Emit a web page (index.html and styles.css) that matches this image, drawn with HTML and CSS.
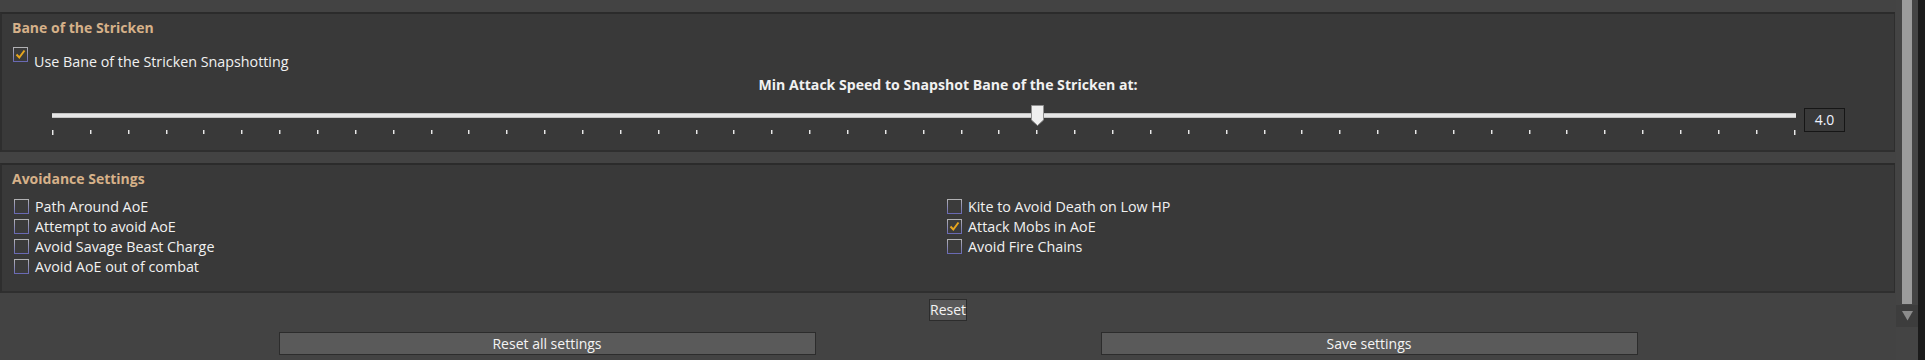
FILE: index.html
```html
<!DOCTYPE html>
<html>
<head>
<meta charset="utf-8">
<link rel="stylesheet" href="styles.css">
</head>
<body>
<div class="window">
  <div class="content">
    <section class="panel panel-bane">
      <h2 class="panel-title">Bane of the Stricken</h2>
      <label class="check check-first">
        <span class="box checked"><svg viewBox="0 0 15 15" width="15" height="15"><polyline points="3.5,7.5 6.3,10.5 11.5,3.5" fill="none" stroke="#e6a51e" stroke-width="2"/></svg></span>
        <span class="check-text">Use Bane of the Stricken Snapshotting</span>
      </label>
      <div class="slider-label">Min Attack Speed to Snapshot Bane of the Stricken at:</div>
      <div class="slider-row">
        <div class="slider">
          <div class="track"></div>
          <div class="ticks">
            <i class="tick end"></i><i class="tick"></i><i class="tick"></i><i class="tick"></i><i class="tick"></i><i class="tick"></i><i class="tick"></i><i class="tick"></i><i class="tick"></i><i class="tick"></i>
            <i class="tick"></i><i class="tick"></i><i class="tick"></i><i class="tick"></i><i class="tick"></i><i class="tick"></i><i class="tick"></i><i class="tick"></i><i class="tick"></i><i class="tick"></i>
            <i class="tick"></i><i class="tick"></i><i class="tick"></i><i class="tick"></i><i class="tick"></i><i class="tick"></i><i class="tick"></i><i class="tick"></i><i class="tick"></i><i class="tick"></i>
            <i class="tick"></i><i class="tick"></i><i class="tick"></i><i class="tick"></i><i class="tick"></i><i class="tick"></i><i class="tick"></i><i class="tick"></i><i class="tick"></i><i class="tick"></i>
            <i class="tick"></i><i class="tick"></i><i class="tick"></i><i class="tick"></i><i class="tick"></i><i class="tick"></i><i class="tick end"></i>
          </div>
          <svg class="thumb" style="left: calc(56.52% - 6.5px)" viewBox="0 0 13 21" width="13" height="21"><path d="M0.5 0.5 H12.5 V15 L6.5 20.5 L0.5 15 Z" fill="#efefef" stroke="#8f8f8f"/></svg>
        </div>
        <div class="value">4.0</div>
      </div>
    </section>

    <section class="panel panel-avoid">
      <h2 class="panel-title">Avoidance Settings</h2>
      <div class="grid">
        <div class="col">
          <label class="check"><span class="box"></span><span class="check-text">Path Around AoE</span></label>
          <label class="check"><span class="box"></span><span class="check-text">Attempt to avoid AoE</span></label>
          <label class="check"><span class="box"></span><span class="check-text">Avoid Savage Beast Charge</span></label>
          <label class="check"><span class="box"></span><span class="check-text">Avoid AoE out of combat</span></label>
        </div>
        <div class="col">
          <label class="check"><span class="box"></span><span class="check-text">Kite to Avoid Death on Low HP</span></label>
          <label class="check"><span class="box checked"><svg viewBox="0 0 15 15" width="15" height="15"><polyline points="3.5,7.5 6.3,10.5 11.5,3.5" fill="none" stroke="#e6a51e" stroke-width="2"/></svg></span><span class="check-text">Attack Mobs in AoE</span></label>
          <label class="check"><span class="box"></span><span class="check-text">Avoid Fire Chains</span></label>
        </div>
      </div>
    </section>

    <div class="reset-row"><button class="btn btn-small">Reset</button></div>
    <div class="actions">
      <button class="btn btn-wide">Reset all settings</button>
      <button class="btn btn-wide">Save settings</button>
    </div>
  </div>
  <div class="scrollbar">
    <div class="scroll-thumb"></div>
    <div class="scroll-arrow"><svg viewBox="0 0 11 10" width="11" height="10"><path d="M0 0 H11 L5.5 9.5 Z" fill="#8c8c8c"/></svg></div>
  </div>
  <div class="edge"></div>
</div>
</body>
</html>
```

FILE: styles.css
```css
* { box-sizing: border-box; }
html, body { margin: 0; padding: 0; }
body {
  background: #434343;
  font-family: "Open Sans", "Noto Sans", sans-serif;
  font-size: 14px;
  color: #f1f1f1;
  overflow: hidden;
}
.window {
  display: flex;
  height: 360px;
}
.content {
  width: 1896px;
  padding-top: 12px;
}
.panel {
  margin: 0 1px 0 0;
  background: #393939;
  border-top: 2px solid #2b2b2b;
  border-bottom: 2px solid #2f2f2f;
  border-left: 2px solid #2e2e2e;
  border-right: 1px solid #2e2e2e;
}
.panel-bane { height: 140px; }
.panel-avoid { height: 130px; margin-top: 11px; }
.panel-title {
  margin: 4px 0 0 10px;
  font-size: 14px;
  line-height: 20px;
  font-weight: 700;
  color: #d6b189;
}
.check {
  display: flex;
  align-items: flex-start;
  height: 20px;
  padding-left: 11px;
}
.check-first { margin-top: 9px; height: 25px; }
.box {
  width: 15px;
  height: 15px;
  margin-top: 2px;
  border: 1px solid;
  border-image: linear-gradient(#b4b4b4, #6767b3) 1;
  background: #3b3b3b;
  flex: none;
  position: relative;
}
.box svg { position: absolute; left: -1px; top: -1px; }
.check-first .box { margin-top: 0; }
.check-text {
  margin-left: 6px;
  font-size: 14.3px;
  line-height: 20px;
  white-space: nowrap;
}
.check-first .check-text { padding-top: 5px; }
.slider-label {
  margin-top: 3px;
  text-align: center;
  font-weight: 700;
  font-size: 14.1px;
  line-height: 20px;
}
.slider-row {
  display: flex;
  margin: 10px 49px 0 50px;
}
.slider {
  flex: 1;
  position: relative;
  height: 30px;
}
.track {
  margin-top: 8px;
  height: 5px;
  background: #e6e6e6;
  border-top: 1px solid #c4c4c4;
  border-bottom: 1px solid #c4c4c4;
}
.ticks {
  display: flex;
  justify-content: space-between;
  margin-top: 12px;
  height: 5px;
}
.tick {
  display: block;
  width: 2px;
  height: 4px;
  background: linear-gradient(90deg, #e8e8e8 50%, #8a8a8a 50%);
}
.tick.end { height: 5px; }
.thumb { position: absolute; top: 0; }
.value {
  margin-left: 8px;
  margin-top: 3px;
  width: 41px;
  height: 24px;
  border: 1px solid #161616;
  text-align: center;
  line-height: 22px;
  color: #eef3ff;
}
.grid {
  display: grid;
  grid-template-columns: 933px 1fr;
  margin: 8px 14px 0 1px;
}
.reset-row {
  display: flex;
  justify-content: center;
  margin-top: 6px;
}
.btn {
  font-family: "Open Sans", "Noto Sans", sans-serif;
  color: #f4f4f4;
  background: #5a5a5a;
  border: 1px solid #2c2c2c;
  padding: 0;
  font-size: 14px;
}
.btn-small {
  width: 38px;
  height: 22px;
  line-height: 20px;
}
.actions {
  display: grid;
  grid-template-columns: 1fr 1fr;
  justify-items: center;
  margin-top: 11px;
  padding: 0 116px 0 136px;
}
.btn-wide {
  width: 537px;
  height: 23px;
  line-height: 21px;
  letter-spacing: 0;
}
.scrollbar {
  width: 22px;
  background: #444444;
  display: flex;
  flex-direction: column;
}
.scroll-thumb {
  margin: 0 6px;
  height: 304px;
  background: #9b9b9b;
}
.scroll-arrow {
  margin-top: 1px;
  height: 22px;
  background: #3d3d3d;
  display: flex;
  justify-content: center;
  padding-top: 6px;
}
.edge {
  width: 7px;
  background: #1b1b1b;
}
```
